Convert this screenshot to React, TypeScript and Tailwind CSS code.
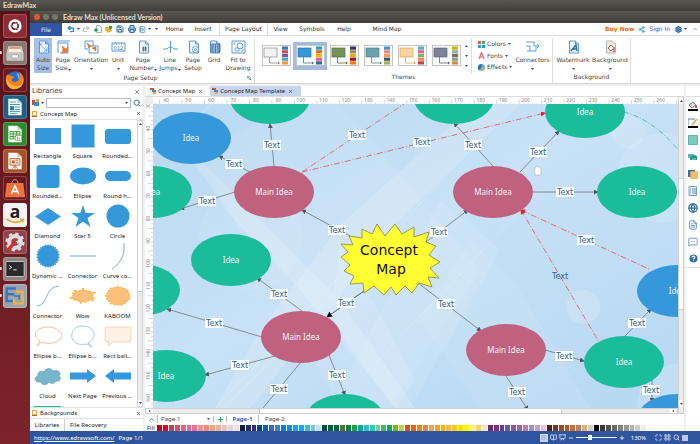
import type { ReactNode } from "react";
import {
    BookOpen, ChevronUp, CircleHelp, FileText, Globe, LayoutGrid, Maximize, MessageSquareMore,
    Minus, NotebookText, Plus, Presentation, Printer, Redo2, Save, Search, Settings, Share2, Undo2, X,
} from "lucide-react";

const NOTO = "font-['Noto_Sans',sans-serif]";
const DEJAVU = "font-['DejaVu_Sans',sans-serif]";
const LATO = "font-['Lato',sans-serif]";
const BLUE = "#3498db";
const GREEN = "#1abc9c";
const ROSE = "#c0617f";
const LINE = "#5b9bd5";

function Caret({ className = "" }: { className?: string }) {
    return (
        <svg width="3" height="2" viewBox="0 0 3 2" className={`shrink-0 ${className}`}>
            <path d="M0 0h3L1.5 2z" fill="#2f4f87" />
        </svg>
    );
}

/* ---------- launcher ---------- */

const dockItems: { name: string; tile: string; art: ReactNode; dot?: boolean }[] = [
    {
        name: "Dash", tile: "bg-[#8c2b33]",
        art: (
            <>
                <circle cx="12" cy="12" r="8" fill="#fff" />
                <circle cx="12" cy="12" r="3.8" fill="none" stroke="#5c1a20" strokeWidth="1.8" />
                <circle cx="7.6" cy="12" r="1.4" fill="#5c1a20" stroke="#fff" strokeWidth=".6" />
                <circle cx="14.2" cy="8.2" r="1.4" fill="#5c1a20" stroke="#fff" strokeWidth=".6" />
                <circle cx="14.2" cy="15.8" r="1.4" fill="#5c1a20" stroke="#fff" strokeWidth=".6" />
            </>
        ),
    },
    {
        name: "Files", tile: "bg-[#85776f]", dot: true,
        art: (
            <>
                <path d="M4 4h16l2 8v9H2v-9z" fill="#d8d3cd" />
                <path d="M5 5h14l1 5H4z" fill="#e98b50" />
                <path d="M5 7h14l1 4H4z" fill="#f4efe8" />
                <rect x="2" y="11" width="20" height="10" rx="1" fill="#c8c3bd" />
                <rect x="8" y="14" width="8" height="4" rx="1" fill="#f7f7f7" stroke="#8b8680" strokeWidth=".6" />
            </>
        ),
    },
    {
        name: "Firefox", tile: "bg-[#6b1820]",
        art: (
            <>
                <circle cx="12" cy="12" r="10.5" fill="#2a6cc4" />
                <path d="M14 4c3 0 4 3 3 5 2 0 2 3 0 4z" fill="#6bc0ee" />
                <path d="M2 6c2-1 4 0 5 1l4 1c0 2-3 2-3 4 1 3 6 3 8 0 3-2 2-6 1-10 7 5 7 13 2 17-7 6-18 2-18-6 0-3 0-5 1-7z" fill="#f0821e" />
                <path d="M3 9c0 7 7 12 14 10 3-1 4-4 4-8 2 7-3 12-10 12-7 0-11-7-8-14z" fill="#f8b730" />
            </>
        ),
    },
    {
        name: "Writer", tile: "bg-[#1e5f85]",
        art: (
            <>
                <path d="M4 2h11l5 5v15H4z" fill="#fff" />
                <path d="M15 2v5h5z" fill="#9cc8e4" />
                <path d="M6 6h7M6 9h12M6 17.500h12M6 20h8" stroke="#2f7fae" strokeWidth="1" />
                <rect x="6" y="11" width="5" height="5" fill="#2f7fae" />
                <path d="M12 12h6M12 15h6" stroke="#2f7fae" />
            </>
        ),
    },
    {
        name: "Calc", tile: "bg-[#2e8a2f]",
        art: (
            <>
                <path d="M4 2h11l5 5v15H4z" fill="#fff" />
                <path d="M15 2v5h5z" fill="#a3dc9a" />
                <path d="M6 9h12v9H6zM6 12h12M6 15h12M10 9v9M14 9v9" stroke="#3a9e33" fill="#dff2da" />
                <rect x="13" y="14" width="7" height="6" fill="#fff" stroke="#3a9e33" strokeWidth=".6" />
                <path d="M15 19v-4M17 19v-3" stroke="#e26a2c" />
            </>
        ),
    },
    {
        name: "Impress", tile: "bg-[#a4532a]",
        art: (
            <>
                <path d="M4 2h11l5 5v15H4z" fill="#fff" />
                <path d="M15 2v5h5z" fill="#ecb48f" />
                <path d="M6 9h12v8H6zM12 17v4M9 21l3-4 3 4" stroke="#b5663b" fill="#f3dccd" />
                <circle cx="10" cy="13" r="2" fill="#b5663b" />
                <path d="M13 11h3M13 14h3" stroke="#b5663b" />
            </>
        ),
    },
    {
        name: "Software", tile: "bg-[#6b1820]",
        art: (
            <>
                <path d="M8 8c0-8 8-8 8 0" stroke="#d8b8a0" strokeWidth="1" fill="none" />
                <path d="M2 6h20l2 17H0z" fill="#f0703a" />
                <path d="M7.500 19 12 9.500l4.500 9.500M8 16h8" stroke="#fff" strokeWidth="1.900" fill="none" />
            </>
        ),
    },
    {
        name: "Amazon", tile: "bg-[#f2f2f0]",
        art: (
            <>
                <text x="12" y="15" textAnchor="middle" fontSize="21" fontWeight="700" fill="#222" fontFamily="Noto Sans, sans-serif">a</text>
                <path d="M2 17c6 5 14 5 19 1" stroke="#f59a1b" strokeWidth="1.800" fill="none" />
                <path d="M18 17h4l-1 4" stroke="#f59a1b" strokeWidth="1.400" fill="none" />
            </>
        ),
    },
    {
        name: "Settings", tile: "bg-[#94424a]",
        art: (
            <>
                <circle cx="12" cy="12" r="7" fill="none" stroke="#dcdcdc" strokeWidth="5" />
                <circle cx="12" cy="12" r="10" fill="none" stroke="#dcdcdc" strokeWidth="3" strokeDasharray="4 3.850" />
                <path d="m5 20 9-10" stroke="#cf2f34" strokeWidth="4" strokeLinecap="round" />
                <path d="m13 11 5-2 3-4-2 7-4 2z" fill="#eee" />
            </>
        ),
    },
    {
        name: "Terminal", tile: "bg-[#8d8484]", dot: true,
        art: (
            <>
                <rect x="1" y="3" width="22" height="18" rx="1" fill="#2b2b2d" stroke="#d8d8d8" />
                <path d="m5 8 3 2-3 2M10 13h4" stroke="#fff" strokeWidth="1.100" fill="none" />
            </>
        ),
    },
    {
        name: "EdrawMax", tile: "bg-[#9aa3b0]", dot: true,
        art: (
            <>
                <path d="M13 3H2v15h8M2 10h9" stroke="#3b76b8" strokeWidth="3" fill="none" />
                <path d="M13 7h8v14H11v-5" stroke="#e8b44a" strokeWidth="3" fill="none" />
                <path d="M11 12h6v4" stroke="#3b76b8" strokeWidth="2" fill="none" />
            </>
        ),
    },
];

function Dock() {
    return (
        <nav aria-label="Launcher" className="flex w-[30px] shrink-0 flex-col gap-[2px] bg-linear-to-b from-[#5a1218] to-[#7d242b] pt-[2px]">
            {dockItems.map((d) => (
                <button key={d.name} aria-label={d.name} className="relative flex h-[25px] w-full shrink-0 items-center justify-center">
                    {d.dot && <span className="absolute top-[11px] left-0 h-[3px] w-[2px] rounded-r bg-[#e8dede]" />}
                    <span className={`flex h-[24px] w-[24px] items-center justify-center rounded-[3px] border border-white/20 ${d.tile}`}>
                        <svg width="20" height="20" viewBox="0 0 24 24" className="overflow-visible">{d.art}</svg>
                    </span>
                </button>
            ))}
        </nav>
    );
}

/* ---------- ribbon ---------- */

function TabRow() {
    const tab = "flex h-full items-center justify-center text-[6px] leading-[8px] text-[#333]";
    const quick = "flex h-full shrink-0 items-center justify-center";
    return (
        <div className={`flex h-[13px] shrink-0 items-stretch border-b border-[#dcdcdc] bg-white ${DEJAVU}`}>
            <button className="-mb-px h-[13px] w-[32px] shrink-0 bg-[#2f55a4] text-[6px] leading-[8px] text-white/90">File</button>
            <div className="flex w-[100px] shrink-0 items-center pl-[4px]">
                <button aria-label="Undo" className={`${quick} w-[14px] gap-[2px]`}><Undo2 size={8} strokeWidth={4} color="#2d86cc" /><Caret /></button>
                <button aria-label="Redo" className={`${quick} w-[12px]`}><Redo2 size={8} strokeWidth={2} color="#888" /></button>
                <button aria-label="New" className={`${quick} w-[11px]`}>
                    <svg width="8" height="8" viewBox="0 0 8 8"><path d="M2.500 .5h3l2 2v5h-5z" fill="#fff" stroke="#5a8f94" strokeWidth=".6" /><path d="M0 5h4M2 3v4" stroke="#18a558" strokeWidth="1.400" /></svg>
                </button>
                <button aria-label="Open" className={`${quick} w-[11px]`}>
                    <svg width="8" height="8" viewBox="0 0 8 8"><path d="M0 2h6l1 4-4 2-3-3z" fill="#f2b233" /><path d="M4 2V1h3v2l-2 2z" fill="#1e9e60" /></svg>
                </button>
                <button aria-label="Save" className={`${quick} w-[12px]`}><Save size={8} strokeWidth={3} color="#2f6ea5" /></button>
                <button aria-label="Print" className={`${quick} w-[12px]`}><Printer size={8} strokeWidth={3.5} color="#2f6ea5" /></button>
                <button aria-label="Options" className={`${quick} w-[14px] gap-[2px]`}><NotebookText size={7} strokeWidth={2.5} color="#4a90c9" /><Caret /></button>
                <button aria-label="Customize" className={`${quick} w-[8px]`}><Caret /></button>
            </div>
            <button className={`${tab} w-[25px]`}>Home</button>
            <button className={`${tab} w-[32px]`}>Insert</button>
            <button className={`${tab} -mb-px h-[13px] w-[49px] border-x border-[#dcdcdc] bg-white text-[#3c62ad]`}>Page Layout</button>
            <button className={`${tab} w-[25px]`}>View</button>
            <button className={`${tab} w-[38px]`}>Symbols</button>
            <button className={`${tab} w-[26px] text-[#3c62ad]`}>Help</button>
            <button className={`${tab} ml-[12px] w-[36px] whitespace-nowrap`}>Mind Map</button>
            <div className="ml-auto flex items-center gap-[4px] pr-[2px] text-[6px] leading-[8px] whitespace-nowrap">
                <a href="#buy" className="font-bold text-[#ff6a00]">Buy Now</a>
                <button aria-label="Share"><Share2 size={7} strokeWidth={3} color="#2aa0dc" /></button>
                <a href="#signin" className="text-[#3b3bff]">Sign In</a>
                <button aria-label="Settings" className="ml-px flex items-center gap-[2px]"><Settings size={7} strokeWidth={4.5} color="#2f6ea5" /><Caret /></button>
                <button aria-label="Collapse" className="pl-[1px]"><ChevronUp size={6} strokeWidth={3} color="#777" /></button>
            </div>
        </div>
    );
}

type ToolProps = { label: string; second?: string; width: string; active?: boolean; caret?: boolean; children: ReactNode };

function Tool({ label, second, width, active, caret, children }: ToolProps) {
    return (
        <button className={`flex h-[35px] shrink-0 flex-col items-center pt-[2px] text-[6px] leading-[8px] text-[#444] ${width} ${active ? "bg-[#a9c0e6]" : ""}`}>
            <svg width="15" height="14" viewBox="0 0 15 14" fill="none" stroke={LINE} className="mb-[2px] shrink-0">{children}</svg>
            <span className="whitespace-nowrap">{label}</span>
            {second && <span className="flex items-end whitespace-nowrap">{second}{caret && <Caret className="mb-[1px]" />}</span>}
            {!second && caret && <Caret className="mt-[4px]" />}
        </button>
    );
}

const themes = [
    { fill: "#f3f3f3", stroke: "#888888", swatches: ["#4472b8", "#c8504b", "#7e57a2", "#46acc5", "#f79646"] },
    { fill: "#3498db", stroke: "#2f79ab", swatches: ["#18a4b8", "#f26c1f", "#ffb400", "#e0609a", "#3b6a94"] },
    { fill: "#76925c", stroke: "#556b40", swatches: ["#3a3663", "#a5805c", "#d6b400", "#a80f20", "#ff7800"] },
    { fill: "#69a2aa", stroke: "#4b8189", swatches: ["#4a90d9", "#f08a80", "#f6a040", "#3d566e", "#a2b04c"] },
    { fill: "#f8d3a0", stroke: "#dca846", swatches: ["#50b0c8", "#ec6080", "#70b870", "#ef8a50", "#c84048"] },
    { fill: "#7d8298", stroke: "#5d6278", swatches: ["#c8b400", "#90b0b8", "#8a6a60", "#80a880", "#d88840"] },
];

function Themes() {
    return (
        <div className="flex items-center pl-[4px]">
            {themes.map((t, i) => (
                <button key={t.fill} aria-label={`Theme ${i + 1}`} className={`flex h-[28px] w-[34px] items-center justify-center ${i === 1 ? "bg-[#a3b9de]" : ""}`}>
                    <svg width="29" height="21" viewBox="0 0 29 21">
                        <rect x=".5" y=".5" width="28" height="20" fill="#fff" stroke="#c4c4c4" />
                        <rect x="2" y="3" width="13" height="9" fill={t.fill} stroke={t.stroke} strokeWidth=".7" />
                        <path d="M7.500 12v6h9" fill="none" stroke={t.stroke} strokeWidth=".8" />
                        <path d="m16 16.500 2 1.500-2 1.500z" fill={t.stroke} />
                        {t.swatches.map((s, n) => <rect key={s} x="20" y={1.5 + n * 3.7} width="6" height="3.200" fill={s} />)}
                    </svg>
                </button>
            ))}
            <div className="flex flex-col items-center gap-[8px] pl-[2px]">
                <Caret className="rotate-180" /><Caret /><Caret />
            </div>
        </div>
    );
}

function Ribbon() {
    const caption = "h-[10px] text-center text-[6px] leading-[8px] text-[#444]";
    const small = "flex items-center gap-[2px] text-[6px] leading-[8px] text-[#444]";
    const doc = <path d="M3.500 1h6l3 3v9h-9z M9.500 1v3h3" fill="#edf5fc" />;
    return (
        <div className={`flex h-[48px] shrink-0 border-b border-[#d4d4d4] bg-white pt-[2px] ${DEJAVU}`}>
            <section className="flex w-[225px] shrink-0 flex-col border-r border-[#dedede] pl-[4px]">
                <div className="flex h-[36px]">
                    <Tool label="Auto" second="Size" width="w-[18px]" active>
                        {doc}<path d="M3.500 4 11 11M8 11h3V8M3.500 7V4h3" strokeWidth=".8" />
                    </Tool>
                    <Tool label="Page" second="Size" width="w-[22px]" caret>
                        <path d="M2 1h12M2 3h10v10H4M2 1v12" /><path d="m6 6 4 3 2-2-1 5-5 1 1-3z" fill="#ef7a2e" stroke="#d45e17" strokeWidth=".5" />
                    </Tool>
                    <Tool label="Orientation" width="w-[34px]" caret>
                        <path d="M1 1h8v5M1 1v8h3M5 6h9v7H5z" /><path d="m3 3 4 3-2 2zM8 8l4 3v-4z" fill="#ef7a2e" stroke="#d45e17" strokeWidth=".5" />
                    </Tool>
                    <Tool label="Unit" width="w-[20px]" caret>
                        <path d="M1 3h13v8H1z" fill="#f6fafe" /><path d="M3 3v2M5.500 3v2M8 3v2M10.500 3v2" strokeWidth=".6" />
                        <text x="7.500" y="10" fontSize="5" textAnchor="middle" fill="#4a80b5" stroke="none">012</text>
                    </Tool>
                    <Tool label="Page" second="Number" width="w-[30px]" caret>
                        {doc}<path d="M6 8h5M6 10h5M7.500 6.500v5M9.500 6.500v5" stroke="#444" strokeWidth=".7" />
                    </Tool>
                    <Tool label="Line" second="Jumps" width="w-[24px]" caret>
                        <path d="M0 9h4a4 4 0 0 1 7 0h4M7.500 1v12" />
                    </Tool>
                    <Tool label="Page" second="Setup" width="w-[22px]">
                        {doc}<circle cx="9.500" cy="9.500" r="3" fill="#fff" strokeDasharray="1.500 .6" strokeWidth="1.200" /><circle cx="9.500" cy="9.500" r="1" />
                    </Tool>
                    <Tool label="Grid" width="w-[20px]">
                        {doc}<path d="M4 4h9v8H4zM4 6h9M4 8h9M4 10h9M6 4v9M8.500 4v9M11 4v9" stroke="#3a72ae" strokeWidth=".9" />
                    </Tool>
                    <Tool label="Fit to" second="Drawing" width="w-[28px]">
                        <path d="M1 1h13v12H1z" /><circle cx="9" cy="6" r="3" /><path d="M4 8h4v3H4zM3 5V3h2M10 11h2V9" strokeWidth=".8" />
                    </Tool>
                </div>
                <div className={`${caption} flex items-center justify-center`}>
                    <span className="flex-1">Page Setup</span>
                    <button aria-label="Page setup options" className="pr-[3px]">
                        <svg width="4" height="4" viewBox="0 0 4 4"><path d="M0 3V0h3M1 1l3 3M4 1.500V4H1.500" fill="none" stroke="#2f6ea5" strokeWidth=".8" /></svg>
                    </button>
                </div>
            </section>
            <section className="flex w-[298px] shrink-0 flex-col border-r border-[#dedede]">
                <div className="flex h-[36px]">
                    <Themes />
                    <div className="ml-[3px] flex h-[35px] w-[43px] shrink-0 flex-col justify-between border-l border-[#dedede] py-[2px] pl-[6px]">
                        <button className={small}>
                            <svg width="7" height="7" viewBox="0 0 7 7"><path d="M0 0h3v3H0z" fill="#e65a4f" /><path d="M4 0h3v3H4z" fill="#4cae6e" /><path d="M0 4h3v3H0z" fill="#3d8fd4" /><path d="M4 4h3v3H4z" fill="#12a6a6" /></svg>
                            Colors<Caret />
                        </button>
                        <button className={small}>
                            <svg width="7" height="7" viewBox="0 0 7 7"><path d="M1 7 3.500 .5 6 7M2 5h3" fill="none" stroke="#ee6070" strokeWidth="1.200" /></svg>
                            Fonts<Caret />
                        </button>
                        <button className={small}>
                            <svg width="7" height="7" viewBox="0 0 7 7"><circle cx="3.500" cy="3.500" r="3.500" fill="#56acd8" /><path d="M3.500 0A3.500 3.500 0 0 0 1 6l2.500-2.500z" fill="#2c70ad" /><path d="M3.500 3.500H7A3.500 3.500 0 0 1 3 7z" fill="#f0a35c" /></svg>
                            Effects<Caret />
                        </button>
                    </div>
                    <Tool label="Connectors" width="w-[37px]" caret>
                        <path d="M1 2h8v4h5M14 6l-2-2M14 6l-2 2M2 11h9V7M1 6h4v5" />
                    </Tool>
                </div>
                <p className={caption}>Themes</p>
            </section>
            <section className="flex w-[78px] shrink-0 flex-col border-r border-[#dedede]">
                <div className="flex h-[36px] justify-center">
                    <Tool label="Watermark" width="w-[37px]" caret>
                        {doc}<path d="m5 11 5-6 1 6M6 9h5" stroke="#2f6ea5" strokeWidth="1.500" />
                    </Tool>
                    <Tool label="Background" width="w-[37px]" caret>
                        <path d="M3.500 1h6l3 3v9h-9z" fill="#fce8c8" stroke="#a9b9c8" /><path d="m5 8 3-3 3 3-3 3z" fill="#fff" stroke="#555" strokeWidth=".8" /><path d="M11 7v5" stroke="#e05080" strokeWidth="1.500" />
                    </Tool>
                </div>
                <p className={caption}>Background</p>
            </section>
        </div>
    );
}

/* ---------- libraries panel ---------- */

// Spiky outline for the burst shapes
function burst(cx: number, cy: number, rx: number, ry: number, n: number, depth: number, wobble = 0) {
    return Array.from({ length: n * 2 }, (_, i) => {
        const a = (Math.PI * i) / n - Math.PI / 2;
        const k = i % 2 ? depth : 1 - (i % 3) * wobble;
        return `${(cx + rx * k * Math.cos(a)).toFixed(1)},${(cy + ry * k * Math.sin(a)).toFixed(1)}`;
    }).join(" ");
}

const shapes: { label: string; art: ReactNode }[] = [
    { label: "Rectangle", art: <rect x="1" y="6" width="26" height="16" fill={BLUE} /> },
    { label: "Square", art: <rect x="2.500" y="2.500" width="23" height="23" fill={BLUE} /> },
    { label: "Rounded...", art: <rect x="1" y="7" width="26" height="15" rx="3" fill={BLUE} /> },
    { label: "Rounded...", art: <rect x="2.500" y="3" width="23" height="23" rx="3" fill={BLUE} /> },
    { label: "Ellipse", art: <ellipse cx="14" cy="14" rx="13" ry="8.500" fill={BLUE} /> },
    { label: "Round h...", art: <rect x="1" y="9" width="26" height="10" rx="5" fill={BLUE} /> },
    { label: "Diamond", art: <path d="m14 6 13 8.500L14 23 1 14.500z" fill={BLUE} /> },
    { label: "Star 5", art: <polygon points="14,3 16.700,11 26,11 18.500,16 21.500,25 14,19.500 6.500,25 9.500,16 2,11 11.300,11" fill={BLUE} /> },
    { label: "Circle", art: <circle cx="14" cy="14" r="11.500" fill={BLUE} /> },
    { label: "Dynamic ...", art: <polygon points={burst(14, 14, 12, 12, 26, 0.86)} fill={BLUE} /> },
    { label: "Connector", art: <path d="M1 14h26" stroke="#6fa2cc" /> },
    { label: "Curve co...", art: <path d="M20 1q2 17-12 26" stroke="#6f94bc" fill="none" strokeWidth=".8" /> },
    { label: "Connector", art: <path d="M3 24c12-1 7-19 22-20" stroke="#6f94cc" fill="none" strokeWidth=".8" /> },
    { label: "Wow", art: <polygon points={burst(14, 14, 14, 8, 17, 0.66, 0.12)} fill="#fdc07c" stroke="#f2ac30" strokeWidth=".7" /> },
    { label: "KABOOM", art: <polygon points={burst(14, 14, 13, 10, 20, 0.84, 0.04)} fill="#fdc07c" stroke="#f2ac30" strokeWidth=".7" /> },
    { label: "Ellipse b...", art: <path d="M6 19C-4 12 4 5 14 5s18 7 11 13c-5 4-12 4-17 2l-5 4z" fill="none" stroke="#f2ac8c" strokeWidth=".8" /> },
    { label: "Ellipse b...", art: <path d="M18 22C-2 26-1 4 13 4c15 0 15 14 6 17l4 4z" fill="none" stroke="#86bbe4" strokeWidth=".8" /> },
    { label: "Rect ball...", art: <path d="M3 5h22q2 0 2 2v11q0 2-2 2H9l-5 4 1-4H3q-2 0-2-2V7q0-2 2-2z" fill="#fef2e6" stroke="#f8ccaa" strokeWidth=".8" /> },
    { label: "Cloud", art: <path d="M4 20c-4-1-4-5 0-6-1-4 3-6 6-4 2-5 8-4 9-1 5-2 9 2 6 5 3 2 1 6-3 5-1 3-6 3-7 1-2 4-8 3-8 0z" fill="#78b4cc" stroke="#68a4bf" strokeWidth=".7" /> },
    { label: "Next Page", art: <path d="M1 10.500h17V7l9 7-9 7v-3.500H1z" fill={BLUE} /> },
    { label: "Previous ...", art: <path d="M27 10.500H10V7l-9 7 9 7v-3.500h17z" fill={BLUE} /> },
];

function Libraries() {
    const heading = `flex h-[12px] shrink-0 items-center gap-[3px] px-[2px] text-[6px] leading-[8px] text-[#222]`;
    const book = (
        <svg width="5" height="6" viewBox="0 0 5 6"><path d="M.5 .5h4v4h-4z" fill="#fff" stroke="#e2a13a" /><path d="M0 5.500h5" stroke="#b86a20" /></svg>
    );
    return (
        <aside className={`flex w-[113px] shrink-0 flex-col bg-white ${NOTO}`}>
            <div className="flex h-[11px] shrink-0 items-center justify-between pr-[3px] pl-[2px]">
                <h2 className={`text-[7px] leading-[9px] text-[#444] ${DEJAVU}`}>Libraries</h2>
                <button aria-label="Close libraries"><X size={6} strokeWidth={2.5} color="#444" /></button>
            </div>
            <div className="flex h-[11px] shrink-0 items-center gap-[2px] px-[2px]">
                <button aria-label="Library menu" className="flex shrink-0 items-center gap-[2px]">
                    <svg width="7" height="7" viewBox="0 0 7 7"><path d="M0 1h3v5H0z" fill="#d34a3a" /><path d="M4 0h3v3H4z" fill="#eaa54a" /><path d="M2 3h5v4H2z" fill="#3f86c8" /></svg>
                    <Caret />
                </button>
                <div className="flex h-[10px] min-w-0 flex-1 items-center border border-[#bbb] pr-[2px]">
                    <input aria-label="Search libraries" className="h-[8px] min-w-0 flex-1 text-[6px] outline-none" />
                    <Caret />
                </div>
                <button aria-label="Search" className="shrink-0"><Search size={8} strokeWidth={3} color="#3a78b8" /></button>
            </div>
            <div className={`${heading} border-b border-[#e4e4e4]`}>
                {book}<span className="flex-1">Concept Map</span>
                <button aria-label="Close Concept Map"><X size={5} strokeWidth={3} color="#333" /></button>
            </div>
            <div className="flex min-h-0 flex-1">
                <div className="grid flex-1 auto-rows-[40px] grid-cols-3 content-start overflow-hidden pr-[2px]">
                    {shapes.map((s, i) => (
                        <button key={i} className="flex flex-col items-center text-[6px] leading-[8px] text-[#222]">
                            <svg width="28" height="28" viewBox="0 0 28 28" className="mt-[2px] mb-[2px] shrink-0">{s.art}</svg>
                            <span className="whitespace-nowrap">{s.label}</span>
                        </button>
                    ))}
                    <span className="mx-[4px] mt-[6px] h-[4px] bg-[#1abc9c]" />
                </div>
                <div className="flex w-[6px] shrink-0 flex-col items-center border border-[#d4d4d4] bg-[#ececec]">
                    <span className="flex h-[6px] w-full items-center justify-center bg-white"><Caret className="rotate-180" /></span>
                    <span className="h-[165px] w-full border-b border-[#ccc] bg-white" />
                    <span className="mt-auto flex h-[6px] w-full items-center justify-center bg-white"><Caret /></span>
                </div>
            </div>
            <div className={`${heading} border-y border-[#e4e4e4]`}>
                {book}<span className="flex-1">Backgrounds</span>
                <button aria-label="Close Backgrounds"><X size={5} strokeWidth={3} color="#333" /></button>
            </div>
            <div className="flex h-[12px] shrink-0 items-center text-[6px] leading-[8px] text-[#222]">
                <button className="h-full w-[35px] border-r border-[#ccc]">Libraries</button>
                <button className="h-full px-[5px]">File Recovery</button>
            </div>
        </aside>
    );
}

/* ---------- drawing page ---------- */

// cx, cy, colour, label
const ideas: [number, number, string, string][] = [
    [191, 138, BLUE, "Idea"],
    [270, 98, GREEN, ""],
    [152, 192, GREEN, "Idea"],
    [231, 260, GREEN, "Idea"],
    [140, 290, GREEN, ""],
    [166, 376, GREEN, "Idea"],
    [345, 420, GREEN, ""],
    [454, 98, GREEN, ""],
    [585, 112, GREEN, "Idea"],
    [637, 192, GREEN, "Idea"],
    [677, 291, BLUE, "Idea"],
    [624, 362, GREEN, "Idea"],
    [677, 420, BLUE, ""],
    [274, 192, ROSE, "Main Idea"],
    [301, 337, ROSE, "Main Idea"],
    [493, 192, ROSE, "Main Idea"],
    [506, 350, ROSE, "Main Idea"],
];

// start, end, arrow head at the end
const links: [number, number, number, number][] = [
    [250, 172, 219, 156],
    [274, 166, 270, 124],
    [235, 192, 180, 209],
    [350, 236, 302, 210],
    [302, 311, 257, 278],
    [262, 337, 167, 309],
    [275, 356, 205, 375],
    [329, 355, 345, 395],
    [418, 283, 481, 331],
    [506, 376, 528, 410],
    [426, 242, 468, 210],
    [493, 166, 454, 123],
    [520, 172, 559, 131],
    [533, 192, 598, 192],
    [545, 350, 584, 361],
    [624, 337, 651, 309],
    [652, 380, 652, 402],
];

const labels: [number, number][] = [
    [272, 145], [234, 164], [207, 201], [337, 230], [279, 294], [346, 303], [214, 323], [240, 365],
    [279, 389], [337, 375], [357, 135], [422, 142], [473, 145], [439, 232], [446, 304], [517, 392],
    [538, 152], [565, 192], [586, 240], [564, 356], [637, 323], [651, 390],
];

const STAR = "377,224 385,236 395,224 402,234 414,227 414,237 429,232 426,242 436,246 429,255 440,262 430,268 439,278 428,277 432,287 419,283 412,293 405,286 396,295 391,287 384,295 374,286 364,293 363,283 350,284 354,276 344,271 350,265 341,257 348,252 341,244 353,245 349,236 362,238 362,229 372,234";

function Drawing() {
    return (
        <svg width="100%" height="100%" className="block" fontFamily="Noto Sans, sans-serif">
            <defs>
                <linearGradient id="sky" x1="0" y1="0" x2="1" y2="1">
                    <stop offset="0" stopColor="#b9d9f2" /><stop offset=".45" stopColor="#c8e1f6" /><stop offset="1" stopColor="#b6d8f2" />
                </linearGradient>
                <marker id="head" viewBox="0 0 6 6" refX="5" refY="3" markerWidth="5" markerHeight="5" orient="auto" markerUnits="userSpaceOnUse">
                    <path d="M0 0 6 3 0 6z" fill="#505860" />
                </marker>
                <marker id="headBlack" viewBox="0 0 6 6" refX="5" refY="3" markerWidth="6" markerHeight="6" orient="auto" markerUnits="userSpaceOnUse">
                    <path d="M0 0 6 3 0 6z" fill="#000" />
                </marker>
                <marker id="headRed" viewBox="0 0 6 6" refX="5" refY="3" markerWidth="5" markerHeight="5" orient="auto-start-reverse" markerUnits="userSpaceOnUse">
                    <path d="M0 0 6 3 0 6z" fill="#f21a2a" />
                </marker>
            </defs>
            <rect width="100%" height="100%" fill="url(#sky)" />
            <g transform="translate(-153 -104)">
                <g fill="#fff">
                    <path d="M200 160 280 104h60L480 270 390 408H340z" opacity=".08" />
                    <path d="M153 104 205 165 340 300 415 408H395L300 290 230 215z" opacity=".16" />
                    <path d="M475 104 340 225 260 330 215 408H250L400 220 520 104z" opacity=".16" />
                    <path d="m340 240 75 140-20 28L330 320z" opacity=".12" />
                    <path d="m440 200 60 50-90 158h-80z" opacity=".1" />
                    <path d="M470 240 520 290 590 408H480L420 320z" opacity=".08" />
                    <circle cx="251" cy="238" r="52" opacity=".08" />
                    <circle cx="628" cy="132" r="17" opacity=".13" />
                    <circle cx="662" cy="178" r="45" opacity=".12" />
                    <circle cx="583" cy="307" r="17" opacity=".16" />
                    <circle cx="682" cy="408" r="45" opacity=".14" />
                </g>
                <path d="m153 150 60-46M215 408l180-190M225 408l220-230M343 397 540 190M400 230l80 60" stroke="#fff" strokeWidth=".6" opacity=".35" />

                <g stroke="#6f7780" strokeWidth=".8" fill="none">
                    {links.map(([x1, y1, x2, y2]) => (
                        <line key={`${x1}-${y1}`} x1={x1} y1={y1} x2={x2} y2={y2} markerEnd="url(#head)" />
                    ))}
                    <path d="m301 362-38 46" />
                </g>
                <path d="m364 291-37 26" stroke="#333" strokeWidth=".8" markerEnd="url(#headBlack)" />
                <g stroke="#e4606a" strokeWidth=".9" strokeDasharray="6 2 1 2" fill="none">
                    <path d="M302 172 404 104" />
                    <path d="M302 172 545 113" markerEnd="url(#headRed)" />
                    <path d="m521 210 130 60" markerStart="url(#headRed)" />
                    <path d="m521 210 78 132" markerStart="url(#headRed)" />
                </g>
                <path d="M624 112q30 8 55 39" stroke="#38b597" strokeWidth=".8" strokeDasharray="5 2 1 2" fill="none" />

                {ideas.map(([x, y, fill, label]) => (
                    <g key={`${x}-${y}`}>
                        <ellipse cx={x} cy={y} rx="40" ry="26" fill={fill} />
                        <text x={x} y={y + 3} textAnchor="middle" fontSize="8" fill="#eef6f8">{label}</text>
                    </g>
                ))}

                <polygon points={STAR} fill="#ffff33" stroke="#77773a" strokeWidth=".7" />
                <g fontFamily="DejaVu Sans, sans-serif" textAnchor="middle">
                    <text x="389" y="255" fontSize="14" fill="#111">Concept</text>
                    <text x="391" y="274" fontSize="14" fill="#111">Map</text>
                    {labels.map(([x, y]) => (
                        <g key={`${x}-${y}`}>
                            <rect x={x - 9} y={y - 5} width="18" height="10" fill="#fff" />
                            <text x={x} y={y + 3} fontSize="8" fill="#2a658f">Text</text>
                        </g>
                    ))}
                    <text x="560" y="279" fontSize="8" fill="#2a658f">Text</text>
                </g>
                <path d="M535 167h4l2 2v6h-6z" fill="#fff" stroke="#b5b5b5" strokeWidth=".6" />
            </g>
        </svg>
    );
}

function TopRuler() {
    return (
        <svg width="100%" height="8" className="block">
            {Array.from({ length: 120 }, (_, i) => (
                <path key={i} d={`M${2 + i * 4.496} 8v${i % 5 === 1 ? -5 : -2}`} stroke="#bbb" strokeWidth=".6" />
            ))}
            {Array.from({ length: 23 }, (_, i) => (
                <text key={i} x={13 + i * 22.48} y="5" textAnchor="middle" fontSize="5" fill="#888">{40 + i * 10}</text>
            ))}
        </svg>
    );
}

function SideRuler() {
    return (
        <svg width="8" height="100%" className="block shrink-0 bg-white">
            {Array.from({ length: 70 }, (_, i) => (
                <path key={i} d={`M8 ${3 + i * 4.496}h${i % 5 === 2 ? -5 : -2}`} stroke="#bbb" strokeWidth=".6" />
            ))}
            {Array.from({ length: 14 }, (_, i) => (
                <text key={i} transform={`translate(5 ${2 + i * 22.48}) rotate(-90)`} textAnchor="middle" fontSize="5" fill="#888">{30 + i * 10}</text>
            ))}
        </svg>
    );
}

const palette = [
    "#c00010", "#e00018", "#c04058", "#e05060", "#e86870", "#f0609a", "#e87090", "#f09090", "#f08880", "#f8a078", "#f0b098", "#f0c0c0", "#e8d0e0", "#fbdce6",
    "#0a1c48", "#1c3068", "#40287c", "#004488", "#0068a8", "#3868b8", "#4080c8", "#0080d0", "#1090d8", "#20a0e8", "#00b0f0", "#30c0f0", "#80c0e8", "#c0e4f0",
    "#084838", "#006030", "#086050", "#587028", "#088040", "#20a040", "#00b098", "#40b8c0", "#20d0b0", "#80c890", "#40b870", "#00b050", "#80b800", "#b8d830",
    "#e84818", "#e86800", "#f88000", "#e88840", "#f8a060", "#f8a800", "#ffb000", "#ffb848", "#f8c828", "#ffe000", "#fff800", "#f8f080", "#f8d068", "#fce6d0",
    "#702870", "#80307c", "#603c90", "#7050a0", "#8858a0", "#a060a0", "#c878a8", "#a090d0", "#c8a0c8", "#f0c0dc",
    "#502010", "#783828", "#985020", "#b05828", "#c87038", "#b88060", "#d8b078", "#d0d0c8",
    "#000000", "#383838", "#505050", "#686868", "#808080", "#989898", "#b0b0b0", "#cccccc", "#eeeeee",
];

function DocTab({ label, active }: { label: string; active?: boolean }) {
    return (
        <div className={`flex h-full items-center gap-[2px] pl-[2px] ${active ? "bg-[#c5d5ef] pr-[8px]" : "pr-[7px]"}`}>
            <svg width="6" height="6" viewBox="0 0 6 6"><path d="M0 0h4v2H0z" fill="#de4b40" /><path d="M2 2h4v2H2z" fill="#3f88d0" /><path d="M3 4h3v2H3z" fill="#f0b030" /></svg>
            <button className="whitespace-nowrap">{label}</button>
            <button aria-label={`Close ${label}`} className="ml-[1px]"><X size={5} strokeWidth={3} color="#444" /></button>
        </div>
    );
}

function Workspace() {
    return (
        <main className={`flex min-w-0 flex-1 flex-col bg-white text-[6px] leading-[8px] text-[#222] ${NOTO}`}>
            <div className="flex h-[10px] shrink-0 pl-[3px]">
                <DocTab label="Concept Map" />
                <DocTab label="Concept Map Template" active />
            </div>
            <div className="flex min-h-0 flex-1">
                <div className="flex min-w-0 flex-1 flex-col">
                    <div className="flex h-[8px] shrink-0 border-t border-[#ddd]">
                        <span className="w-[8px] shrink-0 bg-[#eee]" />
                        <div className="min-w-0 flex-1"><TopRuler /></div>
                    </div>
                    <div className="flex min-h-0 flex-1">
                        <SideRuler />
                        <div className="min-w-0 flex-1"><Drawing /></div>
                    </div>
                    <div className="flex h-[6px] shrink-0 items-center border border-[#d0d0d0] bg-[#ececec]">
                        <span className="flex h-full w-[7px] items-center justify-center bg-white"><Caret className="rotate-90" /></span>
                        <span className="ml-[20%] h-full w-[57%] border-x border-[#ccc] bg-white" />
                        <span className="ml-auto flex h-full w-[7px] items-center justify-center bg-white"><Caret className="-rotate-90" /></span>
                    </div>
                </div>
                <div className="flex w-[6px] shrink-0 flex-col border border-[#d0d0d0] bg-[#ececec]">
                    <span className="flex h-[7px] items-center justify-center bg-white"><Caret className="rotate-180" /></span>
                    <span className="mt-[74px] h-[132px] border-y border-[#ccc] bg-white" />
                    <span className="mt-auto mb-[6px] flex h-[7px] items-center justify-center bg-white"><Caret /></span>
                </div>
            </div>
            <div className="flex h-[10px] shrink-0 items-center pl-[3px] text-[#444]">
                <ChevronUp size={7} strokeWidth={3} color="#2f6ea5" />
                <label className="ml-[2px] flex w-[56px] shrink-0 items-center border-l border-[#bbb] pl-[3px]">
                    <select aria-label="Page" defaultValue="1" className="h-[8px] flex-1 appearance-none bg-transparent text-[6px] leading-[8px] outline-none">
                        <option value="1">Page-1</option>
                        <option value="2">Page-2</option>
                    </select>
                    <Caret className="mr-[3px]" />
                </label>
                <button aria-label="Add page" className="flex h-[6px] w-[14px] items-center justify-center border-x border-[#bbb]"><Plus size={7} strokeWidth={4} color="#1eac58" /></button>
                <button className="w-[32px] border-r border-[#bbb] font-bold text-[#2e5fd0]">Page-1</button>
                <button className="ml-[6px]">Page-2</button>
            </div>
            <div className="flex h-[7px] shrink-0 items-center pl-[2px]">
                <span className="w-[10px] shrink-0">Fill</span>
                <div className="flex h-[6px] w-[91%] gap-px">
                    {palette.map((c, i) => <button key={i} aria-label={c} className="h-full min-w-0 flex-1" style={{ background: c }} />)}
                </div>
            </div>
        </main>
    );
}

function SideTools() {
    const tools: [string, ReactNode][] = [
        ["Fill", <svg width="10" height="10" viewBox="0 0 10 10"><path d="m1 4 4-3 3 3-4 3z" fill="#ddd" stroke="#666" strokeWidth=".8" /><path d="M8 4v3" stroke="#e0457c" strokeWidth="2" /><path d="M0 8h10v2H0z" fill="#000" /></svg>],
        ["Line", <svg width="10" height="10" viewBox="0 0 10 10"><path d="M0 1h7M0 1v6" stroke="#3a80c4" fill="none" /><path d="m4 7 5-6" stroke="#f0a53a" strokeWidth="1.500" /><path d="M0 8h10v2H0z" fill="#000" /></svg>],
        ["Theme", <svg width="10" height="10" viewBox="0 0 10 10"><path d="M.5 .5h9v9h-9z" fill="#7accc0" stroke="#5eb5a8" /></svg>],
        ["Picture", <svg width="10" height="10" viewBox="0 0 10 10"><path d="M0 2h6v4H0z" fill="#5bb1d8" /><path d="M2 8V5l4-2 3 1v4z" fill="#279b68" /><path d="M4 6h4v2H4z" fill="#5bb1d8" /></svg>],
        ["Layers", <svg width="10" height="10" viewBox="0 0 10 10"><path d="M0 1h7v7H0z" fill="#3a6fae" /><path d="M2.500 2.500h7v7h-7z" fill="#f0bd68" stroke="#d9a24a" strokeWidth=".6" /></svg>],
        ["Properties", <svg width="10" height="10" viewBox="0 0 10 10"><path d="M1 .5h7.500v9H1z" fill="#eef5fb" stroke="#4b87bf" strokeWidth=".8" /><path d="M2 3h1M2 5h1M2 7h1M4 3h4M4 5h4M4 7h4" stroke="#4b87bf" strokeWidth=".9" /></svg>],
        ["Link", <Globe size={10} color="#2f6ea5" strokeWidth={3} />],
        ["Note", <FileText size={10} color="#4b87bf" />],
        ["Comment", <MessageSquareMore size={10} color="#4b87bf" />],
        ["Help", <CircleHelp size={11} color="#fff" fill="#2f6ea5" strokeWidth={2.5} />],
    ];
    return (
        <aside className="w-[14px] shrink-0 bg-white pt-[10px]">
            <div className="border-y border-[#ddd]">
                {tools.map(([name, icon]) => (
                    <button key={name} aria-label={name} className="flex h-[17px] w-full items-center justify-center">{icon}</button>
                ))}
            </div>
        </aside>
    );
}

function StatusBar() {
    return (
        <footer className={`flex h-[13px] shrink-0 items-center bg-[#30559f] px-[4px] text-[6px] leading-[8px] text-white ${NOTO}`}>
            <a href="https://www.edrawsoft.com/" className="underline">https://www.edrawsoft.com/</a>
            <span className="ml-[4px]">Page 1/1</span>
            <div className="ml-auto flex items-center gap-[2px] pr-[8px]">
                <button aria-label="Normal view" className="flex h-[8px] w-[8px] items-center justify-center bg-[#cddbf3]"><LayoutGrid size={6} color="#8aa4cf" /></button>
                <button aria-label="Full page"><BookOpen size={7} color="#cddbf3" strokeWidth={3} /></button>
                <button aria-label="Presentation"><Presentation size={7} color="#cddbf3" strokeWidth={3} /></button>
                <button aria-label="Zoom out"><Minus size={6} strokeWidth={3} /></button>
                <input type="range" aria-label="Zoom" defaultValue={33} className="h-[5px] w-[41px] appearance-none bg-linear-to-b from-transparent from-40% via-white via-50% to-transparent to-60% [&::-webkit-slider-thumb]:h-[5px] [&::-webkit-slider-thumb]:w-[4px] [&::-webkit-slider-thumb]:appearance-none [&::-webkit-slider-thumb]:bg-white" />
                <button aria-label="Zoom in"><Plus size={6} strokeWidth={3} /></button>
                <span className="ml-[4px]">130%</span>
                <Caret className="mx-px opacity-60" />
                <button aria-label="Fit page"><Maximize size={7} color="#cddbf3" strokeWidth={3} /></button>
                <button aria-label="Fit width"><LayoutGrid size={7} color="#cddbf3" strokeWidth={3} /></button>
                <button aria-label="Zoom area"><Search size={7} color="#cddbf3" strokeWidth={3} /></button>
                <button aria-label="Grid view" className="h-[6px] w-[6px] bg-[#b9c9e6]" />
            </div>
        </footer>
    );
}

export default function App() {
    return (
        <div className="flex h-screen flex-col overflow-hidden bg-white">
            <header className={`flex h-[11px] shrink-0 items-center bg-linear-to-b from-[#585750] to-[#3f3e39] pl-[3px] text-[7px] leading-[9px] font-bold text-[#e2ded4] ${LATO}`}>EdrawMax</header>
            <div className="flex min-h-0 flex-1">
                <Dock />
                <div className="flex min-w-0 flex-1 flex-col">
                    <div className={`flex h-[12px] shrink-0 items-center bg-linear-to-b from-[#57564f] to-[#403f3a] pl-[4px] text-[7px] leading-[9px] font-bold text-[#e2ded4] ${LATO}`}>
                        <div className="mr-[5px] flex gap-[3px]">
                            <button aria-label="Close" className="h-[6px] w-[6px] rounded-full bg-[#e9562a]" />
                            <button aria-label="Minimize" className="h-[6px] w-[6px] rounded-full bg-[#75746d]" />
                            <button aria-label="Maximize" className="h-[6px] w-[6px] rounded-full bg-[#75746d]" />
                        </div>
                        Edraw Max (Unlicensed Version)
                    </div>
                    <TabRow />
                    <Ribbon />
                    <div className="flex min-h-0 flex-1 gap-[2px] bg-[#f0f0f0] pt-[2px]">
                        <Libraries />
                        <Workspace />
                        <SideTools />
                    </div>
                    <StatusBar />
                </div>
            </div>
        </div>
    );
}
